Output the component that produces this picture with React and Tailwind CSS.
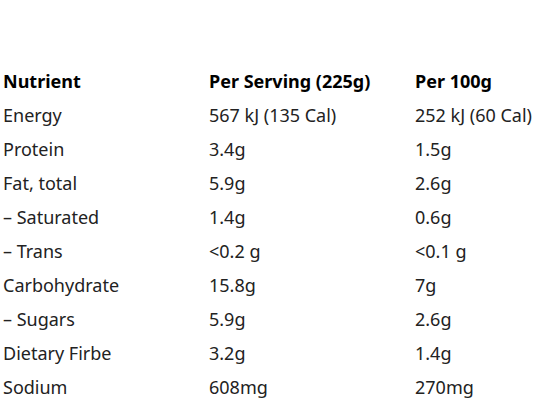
const ROWS = [
  ['Energy', '567 kJ (135 Cal)', '252 kJ (60 Cal)'],
  ['Protein', '3.4g', '1.5g'],
  ['Fat, total', '5.9g', '2.6g'],
  ['– Saturated', '1.4g', '0.6g'],
  ['– Trans', '<0.2 g', '<0.1 g'],
  ['Carbohydrate', '15.8g', '7g'],
  ['– Sugars', '5.9g', '2.6g'],
  ['Dietary Firbe', '3.2g', '1.4g'],
  ['Sodium', '608mg', '270mg'],
]

export default function App() {
  return (
    <div className="h-[409px] w-[553px] overflow-hidden bg-white pt-[64px] text-[18px] leading-[24px] text-[#222] font-['Noto_Sans','Lato',sans-serif]">
      <table className="w-full table-fixed border-collapse">
        <colgroup>
          <col className="w-[206px]" />
          <col className="w-[206px]" />
          <col />
        </colgroup>
        <thead>
          <tr className="h-[34px] text-left font-bold text-black">
            <th className="whitespace-nowrap pl-[3px]">Nutrient</th>
            <th className="whitespace-nowrap pl-[3px]">Per Serving (225g)</th>
            <th className="whitespace-nowrap pl-[3px]">Per 100g</th>
          </tr>
        </thead>
        <tbody>
          {ROWS.map((r) => (
            <tr key={r[0]} className="h-[34px]">
              {r.map((c, i) => (
                <td key={i} className="whitespace-nowrap pl-[3px]">{c}</td>
              ))}
            </tr>
          ))}
        </tbody>
      </table>
    </div>
  )
}
